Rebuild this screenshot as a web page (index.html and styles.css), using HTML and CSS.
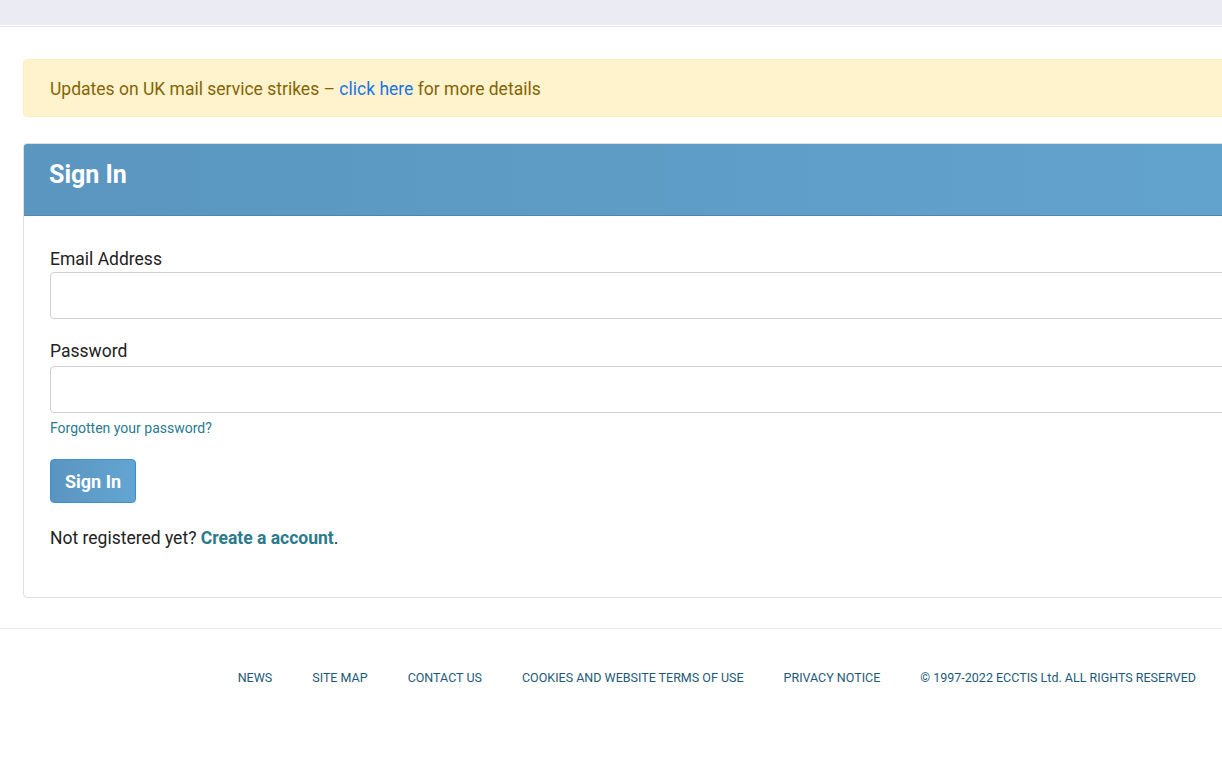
FILE: index.html
```html
<!DOCTYPE html>
<html lang="en">
<head>
<meta charset="utf-8">
<title>Sign In</title>
<link rel="stylesheet" href="styles.css">
</head>
<body>
<div class="topbar"></div>
<div class="topbar-line"></div>
<main class="container">
  <div class="alert">Updates on UK mail service strikes – <a href="#" class="alert-link">click here</a> for more details</div>
  <section class="card">
    <header class="card-header"><h1>Sign In</h1></header>
    <form class="card-body">
      <label class="label" for="email">Email Address</label>
      <input class="input" id="email" type="email">
      <label class="label label-pw" for="pw">Password</label>
      <input class="input" id="pw" type="password">
      <a href="#" class="forgot">Forgotten your password?</a>
      <button type="button" class="btn">Sign In</button>
      <p class="register">Not registered yet? <a href="#" class="create">Create a account</a>.</p>
    </form>
  </section>
</main>
<footer class="footer">
  <nav class="footer-links">
    <a href="#">NEWS</a>
    <a href="#">SITE MAP</a>
    <a href="#">CONTACT US</a>
    <a href="#">COOKIES AND WEBSITE TERMS OF USE</a>
    <a href="#">PRIVACY NOTICE</a>
    <span>© 1997-2022 ECCTIS Ltd. ALL RIGHTS RESERVED</span>
  </nav>
</footer>
</body>
</html>
```
FILE: styles.css
```css
html, body {
  margin: 0;
  padding: 0;
  overflow-x: hidden;
  background: #fff;
  font-family: Roboto, "Liberation Sans", Arial, sans-serif;
  color: #222;
}
.topbar {
  height: 25px;
  background: #ebebf4;
}
.topbar-line {
  margin-top: 1px;
  border-top: 1px solid #e6e6e8;
}
.container {
  width: 1260px;
  padding: 32px 0 0 23px;
}
.alert {
  background: #fff3cd;
  border: 1px solid #ffeeba;
  border-radius: 4px;
  color: #856404;
  font-size: 17.5px;
  line-height: 26px;
  padding: 16px 26px 14px;
}
.alert-link {
  color: #1a73e8;
  text-decoration: none;
}
.card {
  margin-top: 26px;
  border: 1px solid #dedede;
  border-radius: 4px;
  background: #fff;
}
.card-header {
  box-sizing: border-box;
  height: 72px;
  display: flex;
  align-items: center;
  padding: 0 25px 10px;
  background: linear-gradient(90deg, #5a96bf 0%, #62a3cd 100%);
  border-bottom: 1px solid #4e86ad;
  border-radius: 3px 3px 0 0;
}
.card-header h1 {
  margin: 0;
  color: #fff;
  font-size: 25px;
  font-weight: 700;
  line-height: 30px;
}
.card-body {
  display: flex;
  flex-direction: column;
  align-items: flex-start;
  padding: 31px 26px 28px 26px;
}
.label {
  font-size: 17.5px;
  line-height: 25px;
  margin-bottom: 0;
  color: #222;
}
.label-pw {
  margin-top: 20px;
  margin-bottom: 2px;
}
.input {
  box-sizing: border-box;
  width: 100%;
  height: 47px;
  border: 1px solid #cfcfcf;
  border-radius: 4px;
  background: #fff;
}
.forgot {
  margin-top: 5px;
  font-size: 14px;
  line-height: 20px;
  color: #2a7a8e;
  text-decoration: none;
}
.btn {
  margin-top: 21px;
  height: 44px;
  width: 86px;
  padding: 0;
  border: 1px solid #3b8fd6;
  border-radius: 4px;
  background: linear-gradient(90deg, #5a95bf 0%, #63a5d2 100%);
  color: #fff;
  font-family: Roboto, "Liberation Sans", Arial, sans-serif;
  font-size: 18px;
  font-weight: 700;
}
.register {
  margin: 22px 0 18px;
  font-size: 17.5px;
  line-height: 26px;
  color: #222;
}
.create {
  color: #2b7a8d;
  font-weight: 700;
  text-decoration: none;
}
.footer {
  margin-top: 30px;
  border-top: 1px solid #e8e8e8;
  padding: 40px 26px 60px 0;
}
.footer-links {
  display: flex;
  justify-content: flex-end;
  gap: 40px;
  font-size: 12.5px;
  line-height: 18px;
}
.footer-links a, .footer-links span {
  color: #1e5a78;
  text-decoration: none;
}
```
